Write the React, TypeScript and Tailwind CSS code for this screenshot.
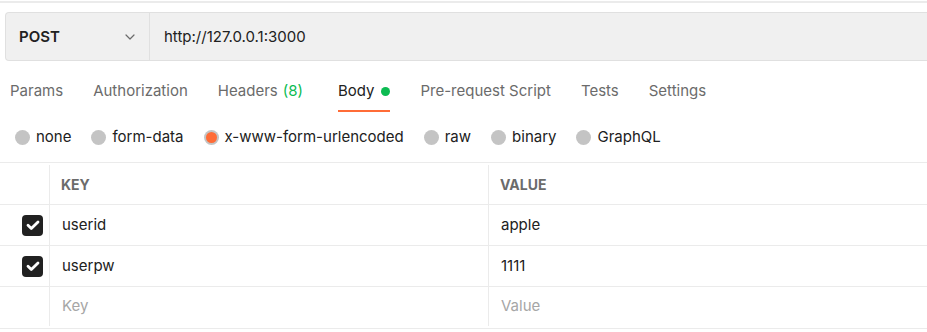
import React from "react";

const tabs = ["Params", "Authorization", "Headers", "Body", "Pre-request Script", "Tests", "Settings"];
const bodyTypes = ["none", "form-data", "x-www-form-urlencoded", "raw", "binary", "GraphQL"];
const rows = [
  { key: "userid", value: "apple" },
  { key: "userpw", value: "1111" },
];

const Check: React.FC = () => (
  <div className="w-[21px] h-[21px] rounded-[4px] bg-[#212121] flex items-center justify-center">
    <svg width="16" height="16" viewBox="0 0 16 16" fill="none">
      <path d="M3 8.3l3.3 3.3L13 4.9" stroke="#fff" strokeWidth="2.8" strokeLinecap="round" strokeLinejoin="round" />
    </svg>
  </div>
);

const App: React.FC = () => {
  return (
    <div className="w-[927px] h-[332px] bg-white overflow-hidden font-['Inter',sans-serif] text-[#212121]">
      <div className="h-[2px] mt-[1px] bg-[#ebebeb]" />
      <div className="pl-[5px] pt-[9px]">
        <div className="flex h-[49px] bg-[#f0f0f0] border border-r-0 border-[#e0e0e0] rounded-l-[4px]">
          <div className="w-[144px] flex items-center justify-between pl-[13px] pr-[13px] border-r border-[#e0e0e0]">
            <span className="text-[15px] font-semibold pt-[1px]">POST</span>
            <svg width="12" height="12" viewBox="0 0 12 12" fill="none">
              <path d="M2 4l4 4 4-4" stroke="#6b6b6b" strokeWidth="1.2" strokeLinecap="round" strokeLinejoin="round" />
            </svg>
          </div>
          <div className="flex items-center pl-[14px] pt-[1px] text-[15px]">http://127.0.0.1:3000</div>
        </div>
      </div>
      <div className="flex pl-[10px] gap-[30px] h-[51px] text-[15px] text-[#6b6b6b]">
        {tabs.map((t) => (
          <div
            key={t}
            className={
              t === "Body"
                ? "relative flex items-center pt-[10px] text-[#212121] ml-[5px]"
                : "flex items-center pt-[10px]"
            }
          >
            {t}
            {t === "Headers" && <span className="ml-[5px] text-[#0cbb52]">(8)</span>}
            {t === "Body" && <span className="ml-[7px] w-[9px] h-[9px] rounded-full bg-[#0cbb52]" />}
            {t === "Body" && <span className="absolute left-0 right-0 bottom-[0px] h-[2px] bg-[#ff6c37]" />}
          </div>
        ))}
      </div>
      <div className="flex items-center h-[50px] pl-[15px] pt-[1px] gap-[20px] text-[15px] text-[#212121]">
        {bodyTypes.map((b) => (
          <div key={b} className="flex items-center gap-[6px]">
            {b === "x-www-form-urlencoded" ? (
              <span className="w-[15px] h-[15px] rounded-full bg-[#c4c4c4] flex items-center justify-center">
                <span className="w-[11px] h-[11px] rounded-full bg-[#ff6c37]" />
              </span>
            ) : (
              <span className="w-[15px] h-[15px] rounded-full bg-[#c4c4c4]" />
            )}
            <span>{b}</span>
          </div>
        ))}
      </div>
      <div className="border-t border-[#ebebeb] text-[15px]">
        <div className="grid grid-cols-[50px_439px_1fr] h-[42px] border-b border-[#ebebeb]">
          <div className="border-r border-[#ebebeb] mt-[2px]" />
          <div className="border-r border-[#ebebeb] mt-[2px] pl-[11px] flex items-center text-[14px] font-bold text-[#6b6b6b]">KEY</div>
          <div className="mt-[2px] pl-[11px] flex items-center text-[14px] font-bold text-[#6b6b6b]">VALUE</div>
        </div>
        {rows.map((r) => (
          <div key={r.key} className="grid grid-cols-[50px_439px_1fr] h-[41px] border-b border-[#ebebeb]">
            <div className="border-r border-[#ebebeb] flex items-center justify-end pr-[6px]">
              <Check />
            </div>
            <div className="border-r border-[#ebebeb] pl-[12px] flex items-center">{r.key}</div>
            <div className="pl-[12px] flex items-center">{r.value}</div>
          </div>
        ))}
        <div className="grid grid-cols-[50px_439px_1fr] h-[42px] border-b border-[#ebebeb]">
          <div className="border-r border-[#ebebeb] mb-[2px]" />
          <div className="border-r border-[#ebebeb] mb-[2px] pl-[12px] flex items-center text-[#a6a6a6]">Key</div>
          <div className="pl-[12px] mb-[2px] flex items-center text-[#a6a6a6]">Value</div>
        </div>
      </div>
    </div>
  );
};

export default App;
